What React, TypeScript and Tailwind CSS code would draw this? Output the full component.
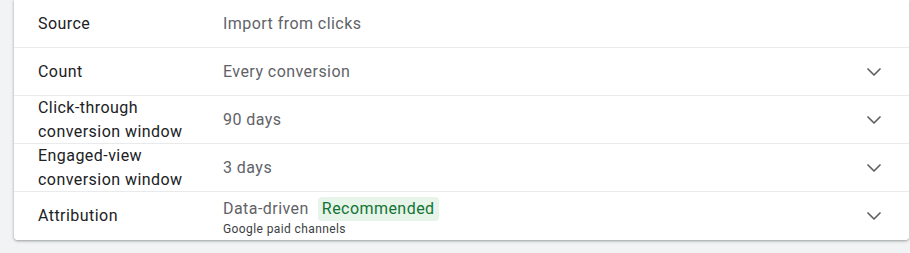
import { ChevronDown } from "lucide-react";

type Row = {
  label: string[];
  value: string;
  chip?: string;
  sub?: string;
  expand?: boolean;
};

const rows: Row[] = [
  { label: ["Source"], value: "Import from clicks" },
  { label: ["Count"], value: "Every conversion", expand: true },
  { label: ["Click-through", "conversion window"], value: "90 days", expand: true },
  { label: ["Engaged-view", "conversion window"], value: "3 days", expand: true },
  {
    label: ["Attribution"],
    value: "Data-driven",
    chip: "Recommended",
    sub: "Google paid channels",
    expand: true,
  },
];

function SettingRow({ row, last }: { row: Row; last: boolean }) {
  return (
    <div
      className={`flex h-[48px] items-center bg-white pl-[24px] pr-[23px] ${
        last ? "rounded-b-[4px]" : "border-b border-[#e8eaed]"
      }`}
    >
      <div className="w-[185px] shrink-0 text-[16px] leading-[24px] tracking-[0.45px] text-[#202124]">
        {row.label.map((l) => (
          <div key={l}>{l}</div>
        ))}
      </div>
      <div className="flex flex-1 flex-col">
        <div className="flex items-center text-[16px] leading-[24px] tracking-[0.45px] text-[#5f6368]">
          <span>{row.value}</span>
          {row.chip && (
            <span className="ml-[9px] rounded-[4px] bg-[#e6f4ea] px-[4px] text-[#137333]">
              {row.chip}
            </span>
          )}
        </div>
        {row.sub && (
          <div className="mt-[1px] text-[12px] leading-[14px] tracking-[0.4px] text-[#3c4043]">
            {row.sub}
          </div>
        )}
      </div>
      {row.expand && (
        <ChevronDown className="h-[24px] w-[24px] text-[#5f6368]" strokeWidth={1.75} />
      )}
    </div>
  );
}

export default function App() {
  return (
    <div
      className="h-[253px] w-[910px] overflow-hidden bg-[#f1f3f4] pl-[14px] pr-[1px]"
      style={{ fontFamily: "Roboto, 'Liberation Sans', sans-serif" }}
    >
      <div className="rounded-b-[4px] shadow-[0_1px_2px_rgba(60,64,67,0.3),0_1px_3px_1px_rgba(60,64,67,0.15)]">
        {rows.map((r, i) => (
          <SettingRow key={r.value} row={r} last={i === rows.length - 1} />
        ))}
      </div>
    </div>
  );
}
